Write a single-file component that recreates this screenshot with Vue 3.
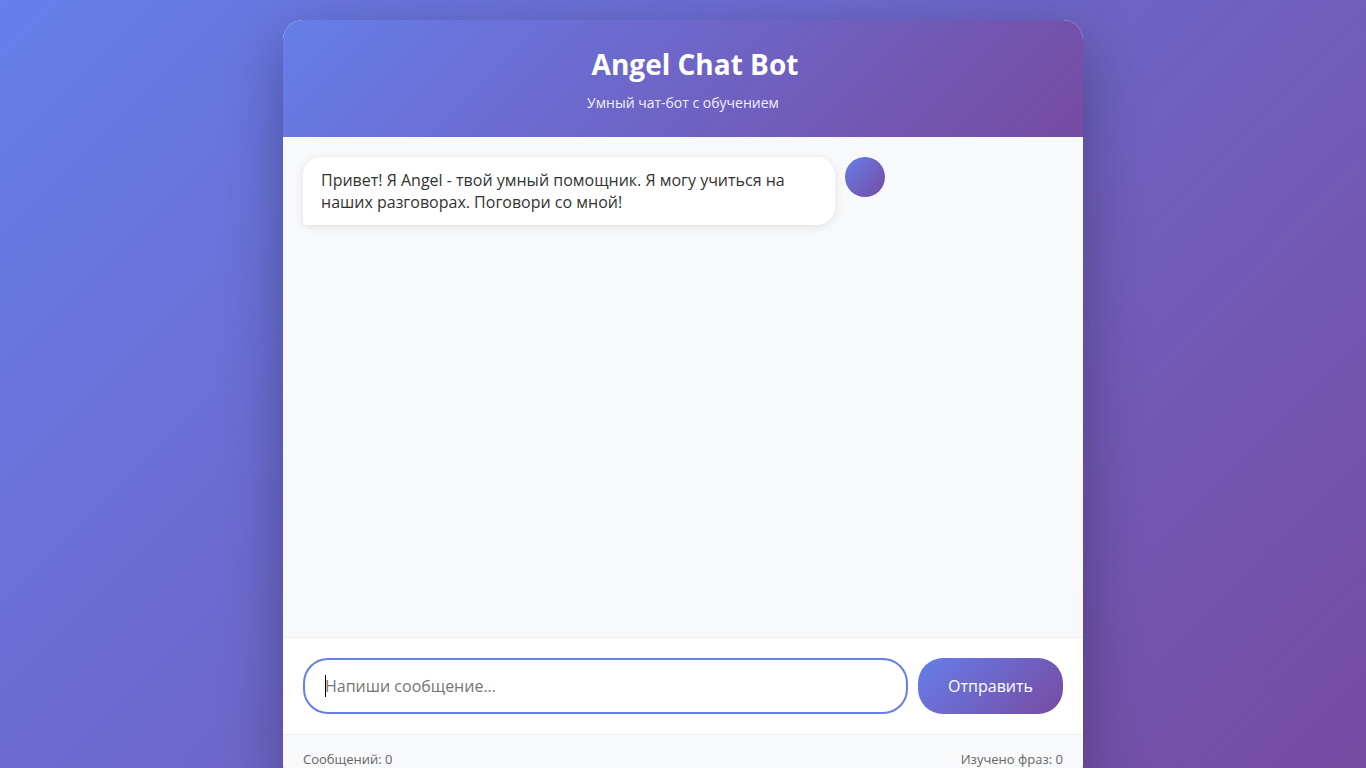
<script setup>
import { ref, onMounted } from 'vue'

const field = ref(null)
const draft = ref('')
const learned = ref(0)
const sent = ref(0)
const messages = ref([
  { id: 1, text: 'Привет! Я Angel - твой умный помощник. Я могу учиться на наших разговорах. Поговори со мной!' }
])

function send() {
  const text = draft.value.trim()
  if (!text) return
  messages.value.push({ id: messages.value.length + 1, text, mine: true })
  sent.value += 1
  draft.value = ''
}

onMounted(() => field.value.focus())
</script>

<template>
  <div class="page">
    <main class="chat">
      <header class="head">
        <h1><span class="mark" aria-hidden="true"></span>Angel Chat Bot</h1>
        <p>Умный чат-бот с обучением</p>
      </header>
      <section class="messages">
        <div v-for="m in messages" :key="m.id" class="message" :class="{ mine: m.mine }">
          <div class="bubble">{{ m.text }}</div>
          <div class="avatar"></div>
        </div>
      </section>
      <form class="composer" @submit.prevent="send">
        <div class="entry">
          <input ref="field" v-model="draft" :class="{ empty: !draft }" type="text" aria-label="Сообщение" placeholder="Напиши сообщение..." autocomplete="off">
          <span v-if="!draft" class="caret" aria-hidden="true"></span>
        </div>
        <button type="submit">Отправить</button>
      </form>
      <footer class="stats">
        <span>Сообщений: {{ sent }}</span>
        <span>Изучено фраз: {{ learned }}</span>
      </footer>
    </main>
  </div>
</template>

<style>
html,
body {
  height: 100%;
  overflow: hidden;
}
body {
  margin: 0;
  background: linear-gradient(135deg, #667eea 0%, #764ba2 100%);
}
</style>

<style scoped>
* {
  box-sizing: border-box;
}
.page {
  padding: 20px;
  font-family: "Open Sans", "Noto Sans", sans-serif;
  color: #333;
}
.chat {
  max-width: 800px;
  margin: 0 auto;
  background: #fff;
  border-radius: 20px;
  box-shadow: 0 20px 60px rgba(0, 0, 0, 0.3);
  overflow: hidden;
}
.head {
  padding: 25px;
  text-align: center;
  color: #fff;
  background: linear-gradient(135deg, #667eea 0%, #764ba2 100%);
}
.head h1 {
  display: flex;
  justify-content: center;
  margin: 0 0 10px;
  font-size: 28px;
  line-height: 38px;
}
.mark {
  width: 24px;
}
.head p {
  margin: 0;
  font-size: 14px;
  line-height: 19px;
  opacity: 0.9;
}
.messages {
  height: 500px;
  padding: 20px;
  overflow-y: auto;
  background: #f8f9fa;
}
.message {
  display: flex;
  gap: 10px;
  margin-bottom: 20px;
}
.mine {
  flex-direction: row-reverse;
}
.bubble {
  max-width: 70%;
  padding: 12px 18px;
  border-radius: 18px;
  border-bottom-left-radius: 4px;
  background: #fff;
  box-shadow: 0 2px 10px rgba(0, 0, 0, 0.1);
  font-size: 16px;
  line-height: 22px;
}
.avatar {
  flex: none;
  width: 40px;
  height: 40px;
  border-radius: 50%;
  background: linear-gradient(135deg, #667eea, #764ba2);
}
.composer {
  display: flex;
  gap: 10px;
  padding: 20px;
  border-top: 1px solid #eee;
  background: #fff;
}
.entry {
  position: relative;
  display: flex;
  flex: 1;
  min-width: 0;
}
.entry input {
  flex: 1;
  min-width: 0;
  padding: 15px 20px;
  border: 2px solid #e9ecef;
  border-radius: 25px;
  outline: none;
  font-family: inherit;
  font-size: 16px;
  line-height: 22px;
}
.entry input:focus {
  border-color: #667eea;
}
.entry input.empty {
  caret-color: transparent;
}
.caret {
  position: absolute;
  left: 22px;
  top: 17px;
  bottom: 17px;
  width: 1px;
  background: #000;
  visibility: hidden;
  pointer-events: none;
}
.entry input:focus + .caret {
  visibility: visible;
}
.composer button {
  padding: 15px 30px;
  border: none;
  border-radius: 25px;
  color: #fff;
  background: linear-gradient(135deg, #667eea, #764ba2);
  font-family: inherit;
  font-size: 16px;
  cursor: pointer;
}
.stats {
  display: flex;
  justify-content: space-between;
  padding: 15px 20px;
  border-top: 1px solid #eee;
  background: #f8f9fa;
  color: #666;
  font-size: 13px;
  line-height: 18px;
}
</style>
